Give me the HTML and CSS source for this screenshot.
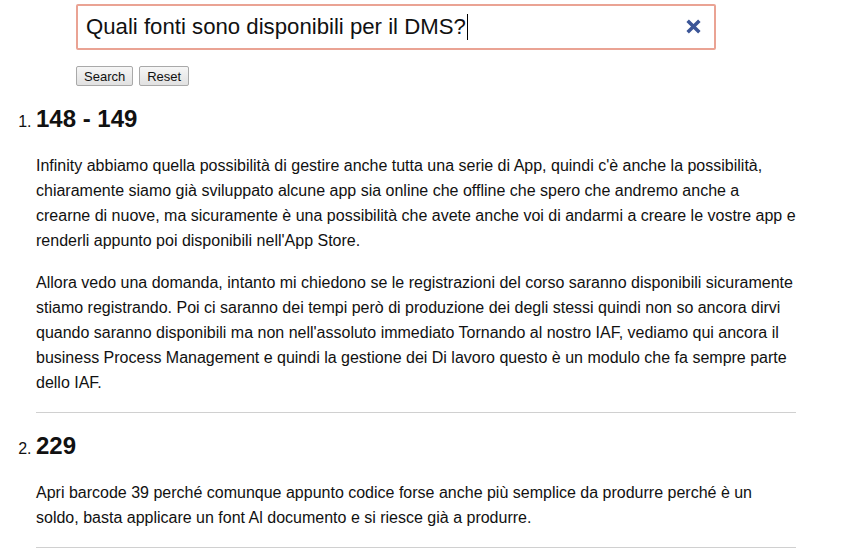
FILE: index.html
```html
<!DOCTYPE html>
<html lang="it">
<head>
<meta charset="utf-8">
<title>DMS search</title>
<link rel="stylesheet" href="styles.css">
</head>
<body>
<div class="search">
  <div class="search-box">
    <span class="query">Quali fonti sono disponibili per il DMS?</span><span class="caret"></span>
    <span class="clear" aria-label="clear">
      <svg width="17" height="17" viewBox="0 0 16 16"><path d="M2.5 2.5 L13.5 13.5 M13.5 2.5 L2.5 13.5" stroke="#3b5597" stroke-width="3.3" stroke-linecap="butt"/></svg>
    </span>
  </div>
  <div class="buttons">
    <button class="btn">Search</button>
    <button class="btn">Reset</button>
  </div>
</div>
<ol class="results">
  <li class="result">
    <h2>148 - 149</h2>
    <p>Infinity abbiamo quella possibilità di gestire anche tutta una serie di App, quindi c'è anche la possibilità, chiaramente siamo già sviluppato alcune app sia online che offline che spero che andremo anche a crearne di nuove, ma sicuramente è una possibilità che avete anche voi di andarmi a creare le vostre app e renderli appunto poi disponibili nell'App Store.</p>
    <p>Allora vedo una domanda, intanto mi chiedono se le registrazioni del corso saranno disponibili sicuramente stiamo registrando. Poi ci saranno dei tempi però di produzione dei degli stessi quindi non so ancora dirvi quando saranno disponibili ma non nell'assoluto immediato Tornando al nostro IAF, vediamo qui ancora il business Process Management e quindi la gestione dei Di lavoro questo è un modulo che fa sempre parte dello IAF.</p>
    <hr>
  </li>
  <li class="result">
    <h2>229</h2>
    <p>Apri barcode 39 perché comunque appunto codice forse anche più semplice da produrre perché è un soldo, basta applicare un font Al documento e si riesce già a produrre.</p>
    <hr>
  </li>
</ol>
</body>
</html>
```
FILE: styles.css
```css
html, body {
  margin: 0;
  padding: 0;
  background: #fff;
}
body {
  font-family: "Liberation Sans", Arial, sans-serif;
  color: #111;
}
.search {
  padding: 4px 0 0 76px;
}
.search-box {
  width: 640px;
  height: 46px;
  box-sizing: border-box;
  border: 2px solid #eaa394;
  border-radius: 2px;
  display: flex;
  align-items: center;
  padding: 0 10px 1px 8px;
}
.query {
  font-size: 22.2px;
  color: #111;
}
.caret {
  display: inline-block;
  width: 1px;
  height: 26px;
  background: #000;
  margin-left: 1px;
}
.clear {
  margin-left: auto;
  display: flex;
  margin-right: 2px;
}
.buttons {
  display: flex;
  gap: 6px;
  margin-top: 16px;
}
.btn {
  font-family: "Liberation Sans", Arial, sans-serif;
  font-size: 13px;
  color: #111;
  height: 20px;
  padding: 0 7px;
  background: linear-gradient(#f6f6f6, #e1e1e1);
  border: 1px solid #a9a9a9;
  border-radius: 2px;
}
.results {
  margin: 0;
  padding: 0 0 0 36px;
  width: 760px;
}
.result {
  font-size: 16px;
  line-height: 25px;
}
.result h2 {
  font-size: 24px;
  line-height: 28px;
  margin: 19px 0 20px;
  font-weight: bold;
}
.result p {
  margin: 0 0 17px;
}
.result hr {
  border: 0;
  border-top: 1px solid #d0d0d0;
  margin: 15px 0 0;
}
```
